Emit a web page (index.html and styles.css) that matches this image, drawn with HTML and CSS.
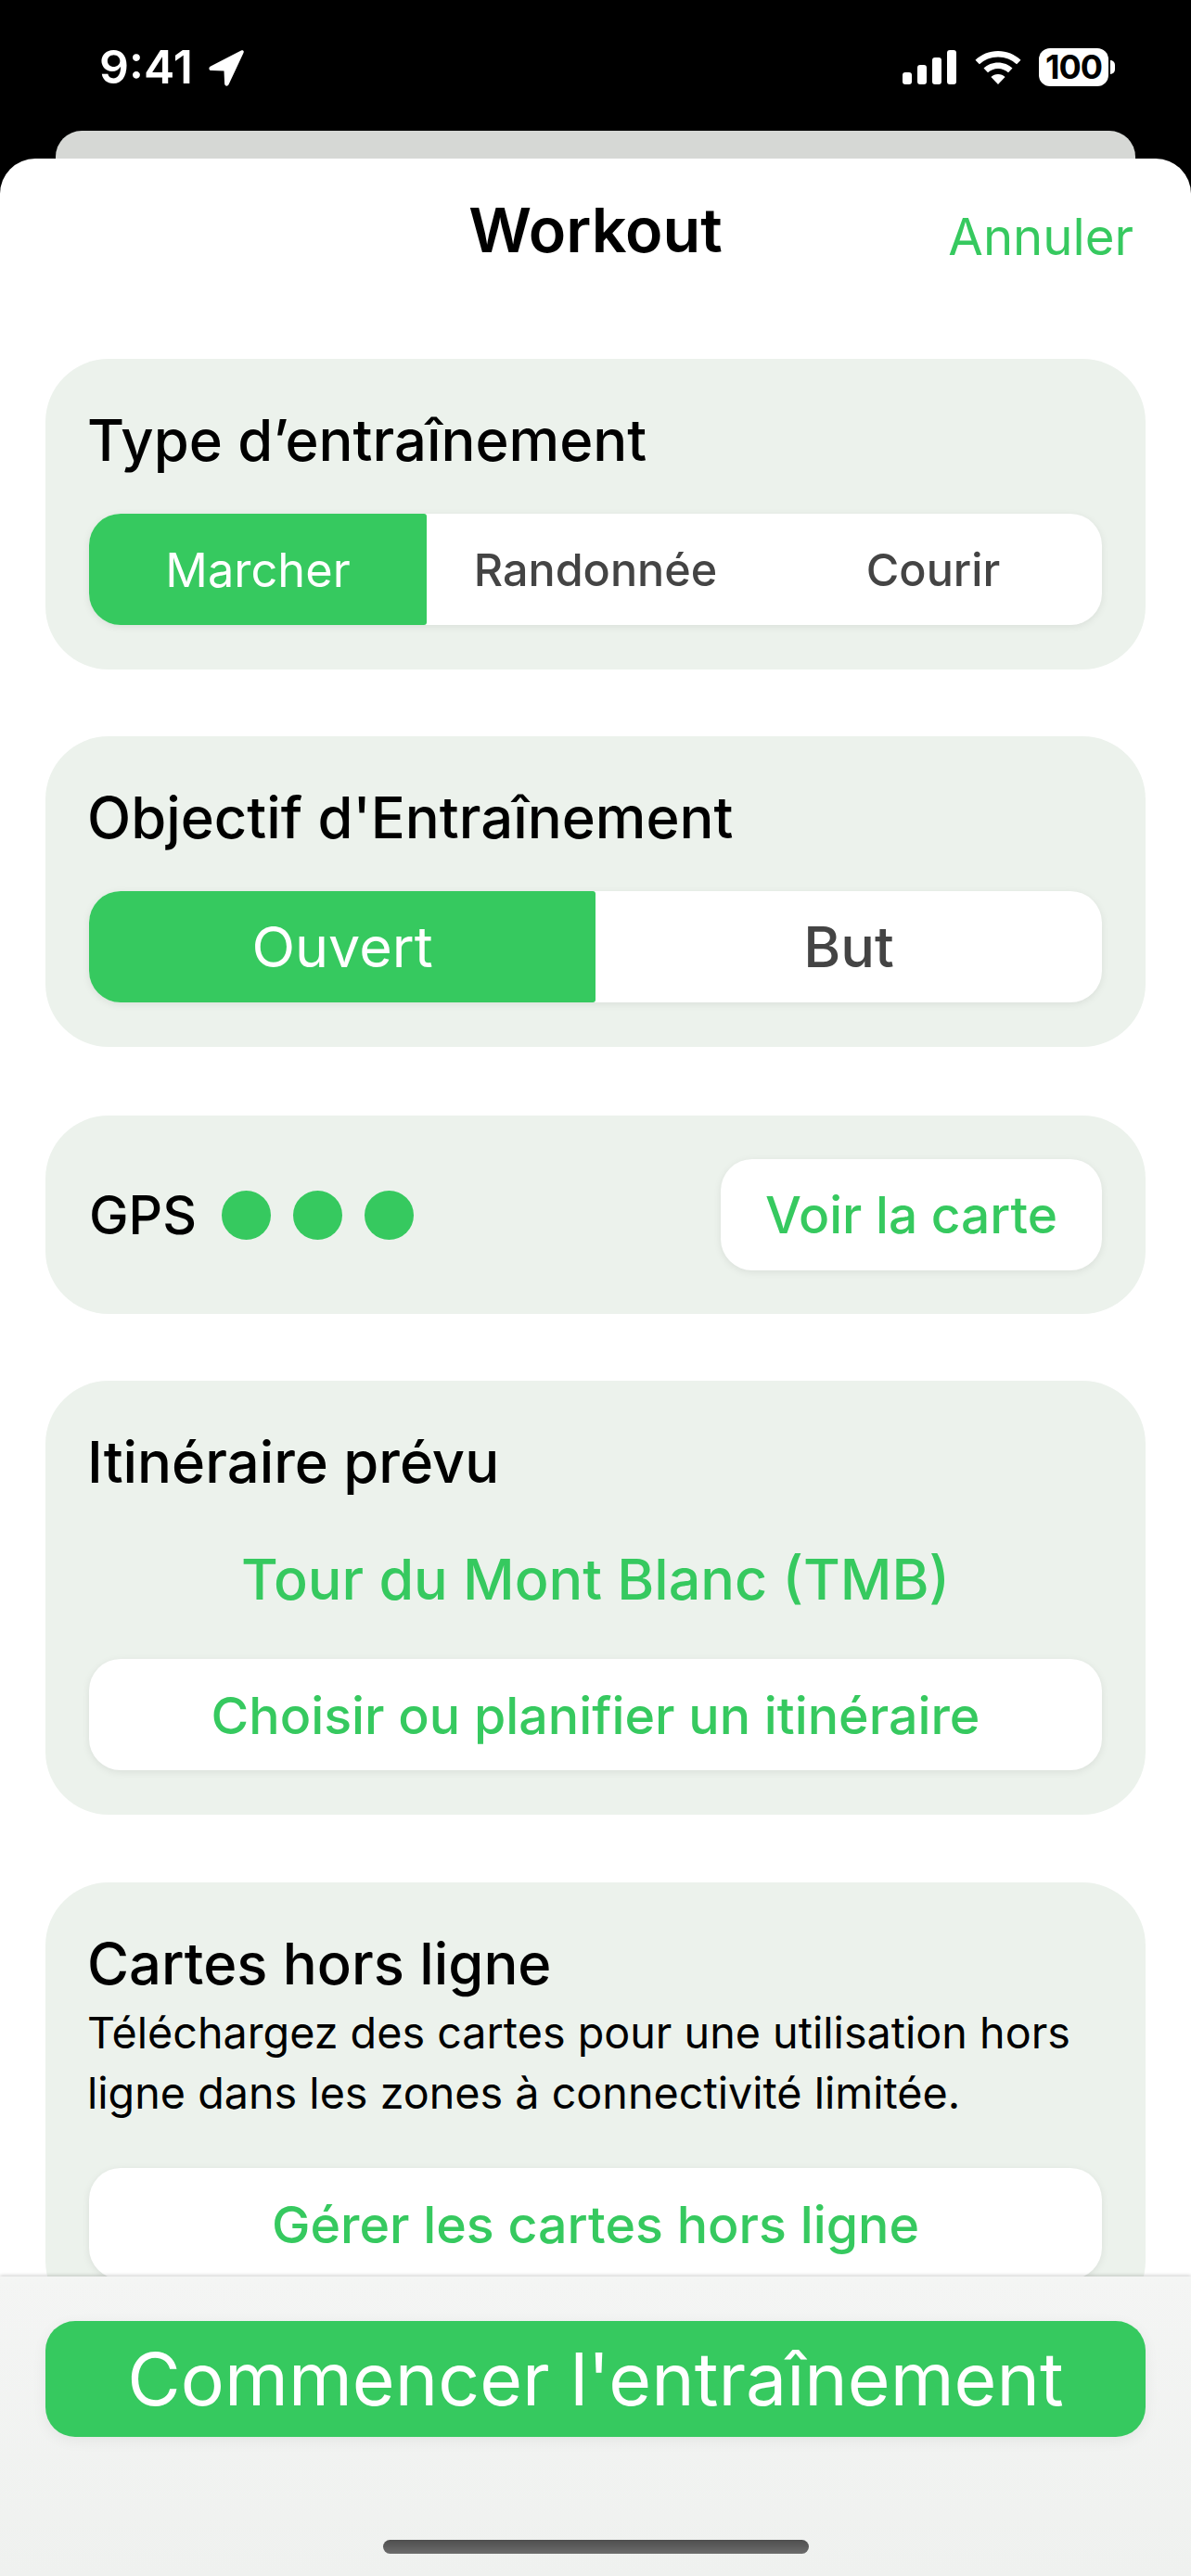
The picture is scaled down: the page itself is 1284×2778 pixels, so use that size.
FILE: index.html
```html
<!DOCTYPE html>
<html lang="fr">
<head>
  <meta charset="UTF-8">
  <title>Workout</title>
  <link rel="stylesheet" href="styles.css">
</head>
<body>

<div class="status-bar">
  <div class="status-left">
    <span class="time">9:41</span>
    <svg class="icon-location" viewBox="0 0 40 40"><path d="M36 1.500 3 18.500c-2.500 1.400-2 4.500 1 4.600l13.500.4.600 13.800c.2 2.800 3.300 3.300 4.500.8L38.500 4c1-2-.6-3.400-2.500-2.500z" fill="#fff"/></svg>
  </div>
  <div class="status-right">
    <svg class="icon-signal" viewBox="0 0 58 37" fill="#fff">
      <rect x="0" y="24" width="10" height="13" rx="3"/>
      <rect x="16" y="16" width="10" height="21" rx="3"/>
      <rect x="32" y="8" width="10" height="29" rx="3"/>
      <rect x="48" y="0" width="10" height="37" rx="3"/>
    </svg>
    <svg class="icon-wifi" viewBox="0 0 50 36" fill="#fff">
      <path d="M25 0C15.500 0 7 3.700.5 9.700l4.400 4.600C10.200 9.400 17.200 6.400 25 6.400s14.800 3 20.100 7.900l4.400-4.600C43 3.700 34.500 0 25 0z"/>
      <path d="M25 12.500c-6 0-11.400 2.300-15.500 6.100l4.500 4.600c2.900-2.600 6.800-4.300 11-4.300s8.100 1.700 11 4.300l4.500-4.600c-4.100-3.800-9.500-6.100-15.500-6.100z"/>
      <path d="M25 25c-3 0-5.600 1.100-7.600 2.900L25 36l7.600-8.100C30.600 26.100 28 25 25 25z"/>
    </svg>
    <div class="battery"><span class="battery-level">100</span><span class="battery-nub"></span></div>
  </div>
</div>

<div class="back-card"></div>

<div class="sheet">
  <header class="sheet-header">
    <span></span>
    <h1>Workout</h1>
    <a class="cancel">Annuler</a>
  </header>

  <div class="sheet-body">
    <section class="card">
      <h2>Type d’entraînement</h2>
      <div class="segments">
        <div class="segment small selected">Marcher</div>
        <div class="segment small">Randonnée</div>
        <div class="segment small">Courir</div>
      </div>
    </section>

    <section class="card">
      <h2>Objectif d'Entraînement</h2>
      <div class="segments two">
        <div class="segment selected">Ouvert</div>
        <div class="segment">But</div>
      </div>
    </section>

    <section class="card gps-card">
      <div class="gps">
        <span class="gps-label">GPS</span>
        <span class="dot"></span>
        <span class="dot"></span>
        <span class="dot"></span>
      </div>
      <a class="btn map-btn">Voir la carte</a>
    </section>

    <section class="card">
      <h2>Itinéraire prévu</h2>
      <div class="route">Tour du Mont Blanc (TMB)</div>
      <a class="btn">Choisir ou planifier un itinéraire</a>
    </section>

    <section class="card offline-card">
      <h2 class="tight">Cartes hors ligne</h2>
      <p class="desc">Téléchargez des cartes pour une utilisation hors ligne dans les zones à connectivité limitée.</p>
      <a class="btn">Gérer les cartes hors ligne</a>
    </section>
  </div>

  <footer class="sheet-footer">
    <a class="start-btn">Commencer l'entraînement</a>
    <div class="home-bar"></div>
  </footer>
</div>

</body>
</html>
```

FILE: styles.css
```css
body {
  margin: 0;
  width: 1284px;
  height: 2778px;
  overflow: hidden;
  background: #000;
  font-family: Inter, "Liberation Sans", sans-serif;
  display: flex;
  flex-direction: column;
}

h1, h2, p {
  margin: 0;
  font-weight: 400;
}

/* status bar */
.status-bar {
  height: 141px;
  flex-shrink: 0;
  box-sizing: border-box;
  padding: 52px 82px 0 107px;
  display: flex;
  justify-content: space-between;
  align-items: flex-start;
  color: #fff;
}

.status-left {
  display: flex;
  align-items: center;
  gap: 16px;
  height: 41px;
}

.time {
  font-size: 50px;
  font-weight: 600;
  line-height: 41px;
}

.icon-location {
  width: 40px;
  height: 40px;
}

.status-right {
  display: flex;
  align-items: center;
  height: 41px;
}

.icon-signal {
  width: 58px;
  height: 37px;
  margin-right: 20px;
}

.icon-wifi {
  width: 50px;
  height: 36px;
  margin-right: 19px;
}

.battery {
  display: flex;
  align-items: center;
  gap: 2px;
}

.battery-level {
  width: 75px;
  height: 41px;
  background: #fff;
  color: #000;
  border-radius: 12px;
  font-size: 36px;
  font-weight: 700;
  line-height: 41px;
  text-align: center;
  letter-spacing: -1px;
}

.battery-nub {
  width: 5px;
  height: 15px;
  background: #fff;
  border-radius: 0 8px 8px 0;
}

.back-card {
  height: 30px;
  flex-shrink: 0;
  margin: 0 60px;
  background: #d6d8d5;
  border-radius: 28px 28px 0 0;
}

/* sheet */
.sheet {
  flex: 1;
  min-height: 0;
  background: #fff;
  border-radius: 38px 38px 0 0;
  display: flex;
  flex-direction: column;
  overflow: hidden;
}

.sheet-header {
  height: 216px;
  flex-shrink: 0;
  box-sizing: border-box;
  padding: 37px 62px 0;
  display: grid;
  grid-template-columns: 1fr auto 1fr;
  align-items: start;
}

.sheet-header h1 {
  font-size: 66.500px;
  font-weight: 600;
  line-height: 80px;
  color: #000;
}

.cancel {
  justify-self: end;
  margin-top: 7px;
  font-size: 54.500px;
  line-height: 80px;
  color: #36c95f;
}

.sheet-body {
  flex: 1;
  min-height: 0;
  overflow: hidden;
  padding: 0 49px;
  display: flex;
  flex-direction: column;
  gap: 72px;
}

.card {
  flex-shrink: 0;
  background: #ecf2ec;
  border-radius: 68px;
  padding: 48px 47px;
}

.card h2 {
  font-size: 61.500px;
  font-weight: 460;
  line-height: 80px;
  color: #000;
  margin: 0 0 39px -2px;
}

.card h2.tight {
  margin-bottom: 0;
}

.segments {
  display: grid;
  grid-template-columns: repeat(3, 1fr);
  height: 120px;
  background: #fff;
  border-radius: 34px;
  box-shadow: 0 2px 8px rgba(0,0,0,0.08);
}

.segments.two {
  grid-template-columns: repeat(2, 1fr);
}

.segment {
  display: flex;
  align-items: center;
  justify-content: center;
  font-size: 61px;
  font-weight: 500;
  color: #444;
}

.segment.small {
  font-size: 48.500px;
}

.segment.selected {
  background: #36c95f;
  color: #fff;
  font-weight: 400;
  border-radius: 34px 3px 3px 34px;
}

.segment.small.selected {
  font-size: 50.500px;
}

.gps-card {
  height: 214px;
  margin-top: 2px;
  box-sizing: border-box;
  display: flex;
  align-items: center;
  justify-content: space-between;
  padding: 0 47px;
}

.offline-card {
  margin-top: 1px;
}

.gps {
  display: flex;
  align-items: center;
  gap: 24px;
}

.gps-label {
  font-size: 57px;
  font-weight: 460;
  color: #000;
  margin-right: 3px;
}

.dot {
  width: 53px;
  height: 53px;
  border-radius: 50%;
  background: #36c95f;
}

.btn {
  display: flex;
  align-items: center;
  justify-content: center;
  height: 120px;
  background: #fff;
  border-radius: 34px;
  box-shadow: 0 2px 8px rgba(0,0,0,0.08);
  font-size: 55.500px;
  font-weight: 500;
  color: #36c95f;
}

.map-btn {
  width: 411px;
  font-size: 55px;
}

.route {
  height: 172px;
  margin-top: -39px;
  display: flex;
  align-items: center;
  justify-content: center;
  font-size: 61px;
  font-weight: 500;
  color: #36c95f;
}

.desc {
  font-size: 46.700px;
  line-height: 65px;
  color: #000;
  margin: 2px 0 48px -2px;
}

/* footer */
.sheet-footer {
  position: relative;
  height: 323px;
  flex-shrink: 0;
  box-sizing: border-box;
  padding: 48px 49px 0;
  background: linear-gradient(#f4f5f4, #eff1ef);
  box-shadow: 0 -1px 4px rgba(0,0,0,0.2);
}

.start-btn {
  display: flex;
  align-items: center;
  justify-content: center;
  height: 125px;
  background: #36c95f;
  border-radius: 32px;
  box-shadow: 0 4px 16px rgba(0,0,0,0.06);
  font-size: 78.700px;
  color: #fff;
}

.home-bar {
  width: 459px;
  height: 15px;
  margin: 111px auto 0;
  border-radius: 8px;
  background: linear-gradient(#4e4e4e, #6c6c6c);
}
```
